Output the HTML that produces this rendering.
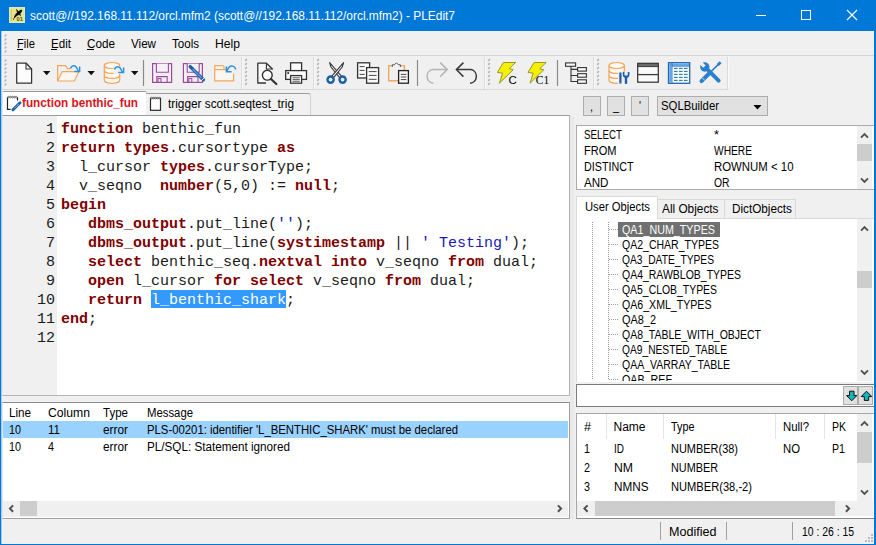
<!DOCTYPE html>
<html lang="en"><head><meta charset="utf-8"><title>PLEdit7</title>
<style>
html,body{margin:0;padding:0;background:#f0f0f0;}
body{width:876px;height:545px;overflow:hidden;position:relative;}
#win{position:absolute;left:0;top:0;width:876px;height:545px;overflow:hidden;background:#f0f0f0;}
.b{position:absolute;box-sizing:border-box;}
.t{position:absolute;white-space:pre;line-height:1;transform-origin:0 0;color:#000;}
.u{font-family:"Liberation Sans",sans-serif;font-size:12px;}
.m{font-family:"Liberation Mono",monospace;font-size:15px;}
.s1{font-family:"Liberation Sans",sans-serif;font-size:5.8px;font-weight:700;}
.s2{font-family:"Liberation Sans",sans-serif;font-size:11.5px;}
.s3{font-family:"Liberation Serif",serif;font-size:11.5px;}

</style></head>
<body>
<div id="win">
<div class="b" style="left:0px;top:0px;width:876px;height:31px;background:#0078d7;"></div><svg class="b" style="left:9px;top:7px" width="16" height="16" viewBox="0 0 16 16"><rect x="0" y="0" width="16" height="16" fill="#e5e58c"/><rect x="0.4" y="0.4" width="15.2" height="15.2" fill="none" stroke="#d3ecd6" stroke-width="0.8"/><path d="M2.3 2 V14" stroke="#e2b462" stroke-width="0.9"/><path d="M13.3 2.9 C11.6 2.7 10.4 3.5 9.6 4.3 L6.9 1.7 L8.1 5.4 C6.2 7 4.9 9 4.7 12.1 C6.4 10.1 8 8.9 10.1 7.8 L11.8 9.5 L11.4 6.5 C12.4 5.5 13.1 4.2 13.3 2.9 Z" fill="#0c0c0c"/><rect x="4" y="11.4" width="0.9" height="1.6" fill="#55551a"/><text x="7.6" y="13.7" class="s1" fill="#55551a">01</text></svg><span class="t u " style="left:30px;top:10px;color:#fff;transform:scaleX(0.9937);">scott@//192.168.11.112/orcl.mfm2 (scott@//192.168.11.112/orcl.mfm2) - PLEdit7</span><svg class="b" style="left:750px;top:5px" width="120" height="22" viewBox="0 0 120 22"><path d="M6 10.5 H16" stroke="#fff" stroke-width="1"/><rect x="51.5" y="5.5" width="9" height="9" fill="none" stroke="#fff" stroke-width="1"/><path d="M97 5 L107 15 M107 5 L97 15" stroke="#fff" stroke-width="1.1"/></svg><div class="b" style="left:0px;top:31px;width:1px;height:514px;background:#0078d7;"></div><div class="b" style="left:1px;top:31px;width:1px;height:514px;background:#a9cdee;"></div><div class="b" style="left:874px;top:31px;width:2px;height:514px;background:#0078d7;"></div><div class="b" style="left:0px;top:544px;width:876px;height:1px;background:#0078d7;"></div><div class="b" style="left:2px;top:55px;width:872px;height:1px;background:#d4d4d4;"></div><svg class="b" style="left:3.5px;top:33.5px" width="4" height="20" viewBox="0 0 4 20"><path d="M0.7 2.4 L2.3 0.6" stroke="#b4b4b4" stroke-width="1.5"/><path d="M0.7 6.4 L2.3 4.6" stroke="#b4b4b4" stroke-width="1.5"/><path d="M0.7 10.4 L2.3 8.6" stroke="#b4b4b4" stroke-width="1.5"/><path d="M0.7 14.4 L2.3 12.6" stroke="#b4b4b4" stroke-width="1.5"/><path d="M0.7 18.4 L2.3 16.6" stroke="#b4b4b4" stroke-width="1.5"/></svg><span class="t u " style="left:17px;top:38px;transform:scaleX(0.9305);">File</span><span class="t u " style="left:51px;top:38px;transform:scaleX(0.9668);">Edit</span><span class="t u " style="left:87px;top:38px;transform:scaleX(0.9760);">Code</span><span class="t u " style="left:131px;top:38px;transform:scaleX(0.9691);">View</span><span class="t u " style="left:172px;top:38px;transform:scaleX(0.9637);">Tools</span><span class="t u " style="left:215px;top:38px;transform:scaleX(1.0127);">Help</span><div class="b" style="left:17px;top:49px;width:6px;height:1px;background:#000;"></div><div class="b" style="left:51px;top:49px;width:6px;height:1px;background:#000;"></div><div class="b" style="left:87px;top:49px;width:7px;height:1px;background:#000;"></div><div class="b" style="left:2px;top:89px;width:726px;height:1px;background:#d9d9d9;"></div><svg class="b" style="left:3.5px;top:58.5px" width="4" height="28" viewBox="0 0 4 28"><path d="M0.7 2.4 L2.3 0.6" stroke="#b4b4b4" stroke-width="1.5"/><path d="M0.7 6.4 L2.3 4.6" stroke="#b4b4b4" stroke-width="1.5"/><path d="M0.7 10.4 L2.3 8.6" stroke="#b4b4b4" stroke-width="1.5"/><path d="M0.7 14.4 L2.3 12.6" stroke="#b4b4b4" stroke-width="1.5"/><path d="M0.7 18.4 L2.3 16.6" stroke="#b4b4b4" stroke-width="1.5"/><path d="M0.7 22.4 L2.3 20.6" stroke="#b4b4b4" stroke-width="1.5"/><path d="M0.7 26.4 L2.3 24.6" stroke="#b4b4b4" stroke-width="1.5"/></svg><div class="b" style="left:2px;top:91px;width:145px;height:25px;background:#fff;border:1px solid #d0d0d0;border-top-color:#9a9a9a;border-left-color:#e6e6e6;border-bottom:none;border-radius:2px 2px 0 0;"></div><div class="b" style="left:146px;top:93px;width:165px;height:23px;background:#f1f1f1;border:1px solid #cfcfcf;border-top-color:#9c9c9c;border-left:none;border-bottom:none;border-radius:0 3px 0 0;"></div><span class="t u " style="left:22px;top:97px;font-weight:700;color:#d8141e;transform:scaleX(0.9776);">function benthic_fun</span><span class="t u " style="left:167.5px;top:98px;transform:scaleX(0.9839);">trigger scott.seqtest_trig</span><svg class="b" style="left:6px;top:94px" width="16" height="18" viewBox="0 0 16 18"><path d="M1.5 3.3 V15.4 H4.6 M11.5 3.3 V6.6" fill="none" stroke="#222" stroke-width="1.2"/><circle cx="2.6" cy="3.1" r="0.85" fill="#fff" stroke="#333" stroke-width="0.6"/><circle cx="4.5" cy="3.1" r="0.85" fill="#fff" stroke="#333" stroke-width="0.6"/><circle cx="6.4" cy="3.1" r="0.85" fill="#fff" stroke="#333" stroke-width="0.6"/><circle cx="8.3" cy="3.1" r="0.85" fill="#fff" stroke="#333" stroke-width="0.6"/><circle cx="10.2" cy="3.1" r="0.85" fill="#fff" stroke="#333" stroke-width="0.6"/><path d="M14 8.8 L7 15.8" stroke="#2462ad" stroke-width="3" stroke-linecap="round"/><path d="M12.9 9.9 L8.6 14.2" stroke="#7db3ea" stroke-width="0.9"/><path d="M6 17 L6.4 14.6 L8.4 16.4 Z" fill="#2462ad"/></svg><svg class="b" style="left:149px;top:95px" width="16" height="18" viewBox="0 0 16 18"><rect x="1.5" y="3.3" width="10" height="12" fill="#fff" stroke="#2a2a2a" stroke-width="1.2"/><circle cx="2.6" cy="3.1" r="0.85" fill="#fff" stroke="#333" stroke-width="0.6"/><circle cx="4.5" cy="3.1" r="0.85" fill="#fff" stroke="#333" stroke-width="0.6"/><circle cx="6.4" cy="3.1" r="0.85" fill="#fff" stroke="#333" stroke-width="0.6"/><circle cx="8.3" cy="3.1" r="0.85" fill="#fff" stroke="#333" stroke-width="0.6"/><circle cx="10.2" cy="3.1" r="0.85" fill="#fff" stroke="#333" stroke-width="0.6"/></svg><div class="b" style="left:2px;top:115px;width:568px;height:281px;background:#fff;border:1px solid #b4b4b4;border-top-color:#9c9c9c;border-left-color:#e6e6e6;"></div><div class="b" style="left:3px;top:116px;width:54px;height:279px;background:#f0f0f0;"></div><div class="b" style="left:570px;top:116px;width:4px;height:403px;background:#e9e9e9;"></div><span class="t m " style="left:46px;top:122px;color:#1a1a1a;">1</span><span class="t m " style="left:61px;top:122px;font-weight:700;color:#800000;">function</span><span class="t m " style="left:142px;top:122px;color:#1a1a1a;">benthic_fun</span><span class="t m " style="left:46px;top:141px;color:#1a1a1a;">2</span><span class="t m " style="left:61px;top:141px;font-weight:700;color:#800000;">return</span><span class="t m " style="left:124px;top:141px;font-weight:700;color:#800000;">types</span><span class="t m " style="left:169px;top:141px;color:#1a1a1a;">.cursortype </span><span class="t m " style="left:277px;top:141px;font-weight:700;color:#800000;">as</span><span class="t m " style="left:46px;top:160px;color:#1a1a1a;">3</span><span class="t m " style="left:79px;top:160px;color:#1a1a1a;">l_cursor </span><span class="t m " style="left:160px;top:160px;font-weight:700;color:#800000;">types</span><span class="t m " style="left:205px;top:160px;color:#1a1a1a;">.cursorType;</span><span class="t m " style="left:46px;top:179px;color:#1a1a1a;">4</span><span class="t m " style="left:79px;top:179px;color:#1a1a1a;">v_seqno  </span><span class="t m " style="left:160px;top:179px;font-weight:700;color:#800000;">number</span><span class="t m " style="left:214px;top:179px;color:#1a1a1a;">(5,0) := </span><span class="t m " style="left:295px;top:179px;font-weight:700;color:#800000;">null</span><span class="t m " style="left:331px;top:179px;color:#1a1a1a;">;</span><span class="t m " style="left:46px;top:198px;color:#1a1a1a;">5</span><span class="t m " style="left:61px;top:198px;font-weight:700;color:#800000;">begin</span><span class="t m " style="left:46px;top:217px;color:#1a1a1a;">6</span><span class="t m " style="left:88px;top:217px;font-weight:700;color:#800000;">dbms_output</span><span class="t m " style="left:187px;top:217px;color:#1a1a1a;">.put_line(</span><span class="t m " style="left:277px;top:217px;color:#1818b8;">''</span><span class="t m " style="left:295px;top:217px;color:#1a1a1a;">);</span><span class="t m " style="left:46px;top:236px;color:#1a1a1a;">7</span><span class="t m " style="left:88px;top:236px;font-weight:700;color:#800000;">dbms_output</span><span class="t m " style="left:187px;top:236px;color:#1a1a1a;">.put_line(</span><span class="t m " style="left:277px;top:236px;font-weight:700;color:#800000;">systimestamp</span><span class="t m " style="left:394px;top:236px;color:#1a1a1a;">|| </span><span class="t m " style="left:421px;top:236px;color:#1818b8;">' Testing'</span><span class="t m " style="left:511px;top:236px;color:#1a1a1a;">);</span><span class="t m " style="left:46px;top:255px;color:#1a1a1a;">8</span><span class="t m " style="left:88px;top:255px;font-weight:700;color:#800000;">select</span><span class="t m " style="left:151px;top:255px;color:#1a1a1a;">benthic_seq.</span><span class="t m " style="left:259px;top:255px;font-weight:700;color:#800000;">nextval</span><span class="t m " style="left:331px;top:255px;font-weight:700;color:#800000;">into</span><span class="t m " style="left:376px;top:255px;color:#1a1a1a;">v_seqno </span><span class="t m " style="left:448px;top:255px;font-weight:700;color:#800000;">from</span><span class="t m " style="left:493px;top:255px;color:#1a1a1a;">dual;</span><span class="t m " style="left:46px;top:274px;color:#1a1a1a;">9</span><span class="t m " style="left:88px;top:274px;font-weight:700;color:#800000;">open</span><span class="t m " style="left:133px;top:274px;color:#1a1a1a;">l_cursor </span><span class="t m " style="left:214px;top:274px;font-weight:700;color:#800000;">for</span><span class="t m " style="left:250px;top:274px;font-weight:700;color:#800000;">select</span><span class="t m " style="left:313px;top:274px;color:#1a1a1a;">v_seqno </span><span class="t m " style="left:385px;top:274px;font-weight:700;color:#800000;">from</span><span class="t m " style="left:430px;top:274px;color:#1a1a1a;">dual;</span><span class="t m " style="left:37px;top:293px;color:#1a1a1a;">10</span><span class="t m " style="left:88px;top:293px;font-weight:700;color:#800000;">return</span><div class="b" style="left:151px;top:290px;width:135px;height:18px;background:#3399ff;"></div><span class="t m " style="left:151px;top:293px;color:#fff;">l_benthic_shark</span><span class="t m " style="left:286px;top:293px;color:#1a1a1a;">;</span><span class="t m " style="left:37px;top:312px;color:#1a1a1a;">11</span><span class="t m " style="left:61px;top:312px;font-weight:700;color:#800000;">end</span><span class="t m " style="left:88px;top:312px;color:#1a1a1a;">;</span><span class="t m " style="left:37px;top:331px;color:#1a1a1a;">12</span><div class="b" style="left:2px;top:402px;width:568px;height:117px;background:#fff;border:1px solid #a0a0a0;border-top-color:#8c8c8c;border-left-color:#e3e3e3;"></div><span class="t u " style="left:9px;top:407px;transform:scaleX(0.9697);">Line</span><span class="t u " style="left:48px;top:407px;transform:scaleX(1.0155);">Column</span><span class="t u " style="left:103px;top:407px;transform:scaleX(0.9610);">Type</span><span class="t u " style="left:147px;top:407px;transform:scaleX(0.9445);">Message</span><div class="b" style="left:3px;top:421px;width:565px;height:17px;background:#99d1ff;"></div><span class="t u " style="left:9px;top:424px;transform:scaleX(0.8982);">10</span><span class="t u " style="left:48px;top:424px;transform:scaleX(0.9624);">11</span><span class="t u " style="left:103px;top:424px;transform:scaleX(0.9864);">error</span><span class="t u " style="left:147px;top:424px;transform:scaleX(0.9441);">PLS-00201: identifier 'L_BENTHIC_SHARK' must be declared</span><span class="t u " style="left:9px;top:441px;transform:scaleX(0.8982);">10</span><span class="t u " style="left:48px;top:441px;transform:scaleX(0.8972);">4</span><span class="t u " style="left:103px;top:441px;transform:scaleX(0.9864);">error</span><span class="t u " style="left:147px;top:441px;transform:scaleX(0.9743);">PL/SQL: Statement ignored</span><div class="b" style="left:3px;top:501px;width:565px;height:16px;background:#f0f0f0;"></div><div class="b" style="left:20px;top:501px;width:17px;height:15px;background:#cdcdcd;"></div><svg class="b" style="left:3px;top:500px" width="17" height="17" viewBox="0 0 17 17"><path d="M10.1 5.4 L6.9 8.6 L10.1 11.8" fill="none" stroke="#505050" stroke-width="2"/></svg><svg class="b" style="left:551px;top:500px" width="17" height="17" viewBox="0 0 17 17"><path d="M6.9 5.4 L10.1 8.6 L6.9 11.8" fill="none" stroke="#505050" stroke-width="2"/></svg><div class="b" style="left:660px;top:522px;width:1px;height:18px;background:#a0a0a0;"></div><div class="b" style="left:726px;top:522px;width:1px;height:18px;background:#a0a0a0;"></div><div class="b" style="left:792px;top:522px;width:1px;height:18px;background:#a0a0a0;"></div><span class="t u " style="left:668.5px;top:526px;transform:scaleX(1.0472);">Modified</span><span class="t u " style="left:802px;top:526px;transform:scaleX(0.8660);">10 : 26 : 15</span><svg class="b" style="left:862px;top:531px" width="12" height="12" viewBox="0 0 12 12"><rect x="9" y="3" width="2" height="2" fill="#bdbdbd"/><rect x="6" y="6" width="2" height="2" fill="#bdbdbd"/><rect x="9" y="6" width="2" height="2" fill="#bdbdbd"/><rect x="3" y="9" width="2" height="2" fill="#bdbdbd"/><rect x="6" y="9" width="2" height="2" fill="#bdbdbd"/><rect x="9" y="9" width="2" height="2" fill="#bdbdbd"/></svg><div class="b" style="left:583px;top:96px;width:18px;height:20px;background:#e1e1e1;border:1px solid #adadad;"></div><div class="b" style="left:607px;top:96px;width:18px;height:20px;background:#e1e1e1;border:1px solid #adadad;"></div><div class="b" style="left:631px;top:96px;width:18px;height:20px;background:#e1e1e1;border:1px solid #adadad;"></div><span class="t u " style="left:590px;top:101px;transform:scaleX(0.8972);">,</span><span class="t u " style="left:613px;top:100px;transform:scaleX(0.8972);">_</span><span class="t u " style="left:639px;top:100px;transform:scaleX(0.8707);">'</span><div class="b" style="left:657px;top:96px;width:111px;height:20px;background:#e1e1e1;border:1px solid #adadad;"></div><span class="t u " style="left:661px;top:100px;transform:scaleX(0.9450);">SQLBuilder</span><svg class="b" style="left:753px;top:104px" width="9" height="6" viewBox="0 0 9 6"><path d="M0.5 1 H8.5 L4.5 5.5 Z" fill="#000"/></svg><div class="b" style="left:576px;top:125px;width:298px;height:65px;background:#fff;border:1px solid #ababab;border-right:none;"></div><span class="t u " style="left:584px;top:129px;transform:scaleX(0.8139);">SELECT</span><span class="t u " style="left:713.5px;top:129px;transform:scaleX(1.0702);">*</span><span class="t u " style="left:584px;top:145px;transform:scaleX(0.9199);">FROM</span><span class="t u " style="left:713.5px;top:145px;transform:scaleX(0.8506);">WHERE</span><span class="t u " style="left:584px;top:161px;transform:scaleX(0.8944);">DISTINCT</span><span class="t u " style="left:713.5px;top:161px;transform:scaleX(0.9500);">ROWNUM &lt; 10</span><span class="t u " style="left:584px;top:177px;transform:scaleX(0.9667);">AND</span><span class="t u " style="left:713.5px;top:177px;transform:scaleX(0.8611);">OR</span><div class="b" style="left:857px;top:126px;width:15px;height:63px;background:#f0f0f0;"></div><div class="b" style="left:857px;top:144px;width:15px;height:17px;background:#cdcdcd;"></div><svg class="b" style="left:856px;top:126px" width="17" height="17" viewBox="0 0 17 17"><path d="M5 11.6 L8.5 8.1 L12 11.6" fill="none" stroke="#505050" stroke-width="1.9"/></svg><svg class="b" style="left:856px;top:172px" width="17" height="17" viewBox="0 0 17 17"><path d="M5 6.4 L8.5 9.9 L12 6.4" fill="none" stroke="#505050" stroke-width="1.9"/></svg><div class="b" style="left:576px;top:218px;width:298px;height:164px;background:#fff;border-left:1px solid #d9d9d9;border-top:1px solid #d9d9d9;"></div><div class="b" style="left:657px;top:199px;width:68px;height:20px;background:#f0f0f0;border:1px solid #d9d9d9;border-left:none;"></div><div class="b" style="left:725px;top:199px;width:71px;height:20px;background:#f0f0f0;border:1px solid #d9d9d9;border-left:none;"></div><div class="b" style="left:576px;top:196px;width:82px;height:23px;background:#fff;border:1px solid #d9d9d9;border-bottom:none;"></div><span class="t u " style="left:584.5px;top:201px;transform:scaleX(0.9371);">User Objects</span><span class="t u " style="left:662px;top:202.5px;transform:scaleX(0.9850);">All Objects</span><span class="t u " style="left:731.5px;top:202.5px;transform:scaleX(0.9778);">DictObjects</span><div class="b" style="left:577px;top:219px;width:279px;height:162px;overflow:hidden;"><svg class="b" style="left:0px;top:0px" width="60" height="162" viewBox="0 0 60 162"><path d="M15.5 3 V160 M31.5 3 V160" stroke="#9a9a9a" stroke-width="1" stroke-dasharray="1 1"/><path d="M32 10.5 H41" stroke="#9a9a9a" stroke-width="1" stroke-dasharray="1 1"/><path d="M32 25.5 H41" stroke="#9a9a9a" stroke-width="1" stroke-dasharray="1 1"/><path d="M32 40.5 H41" stroke="#9a9a9a" stroke-width="1" stroke-dasharray="1 1"/><path d="M32 55.5 H41" stroke="#9a9a9a" stroke-width="1" stroke-dasharray="1 1"/><path d="M32 70.5 H41" stroke="#9a9a9a" stroke-width="1" stroke-dasharray="1 1"/><path d="M32 85.5 H41" stroke="#9a9a9a" stroke-width="1" stroke-dasharray="1 1"/><path d="M32 100.5 H41" stroke="#9a9a9a" stroke-width="1" stroke-dasharray="1 1"/><path d="M32 115.5 H41" stroke="#9a9a9a" stroke-width="1" stroke-dasharray="1 1"/><path d="M32 130.5 H41" stroke="#9a9a9a" stroke-width="1" stroke-dasharray="1 1"/><path d="M32 145.5 H41" stroke="#9a9a9a" stroke-width="1" stroke-dasharray="1 1"/><path d="M32 160.5 H41" stroke="#9a9a9a" stroke-width="1" stroke-dasharray="1 1"/></svg><div class="b" style="left:41px;top:3px;width:102px;height:15px;background:#707070;"></div><span class="t u " style="left:45px;top:5px;color:#fff;transform:scaleX(0.8938);">QA1_NUM_TYPES</span><span class="t u " style="left:45px;top:20px;transform:scaleX(0.8761);">QA2_CHAR_TYPES</span><span class="t u " style="left:45px;top:35px;transform:scaleX(0.8532);">QA3_DATE_TYPES</span><span class="t u " style="left:45px;top:50px;transform:scaleX(0.8732);">QA4_RAWBLOB_TYPES</span><span class="t u " style="left:45px;top:65px;transform:scaleX(0.8684);">QA5_CLOB_TYPES</span><span class="t u " style="left:45px;top:80px;transform:scaleX(0.8827);">QA6_XML_TYPES</span><span class="t u " style="left:45px;top:95px;transform:scaleX(0.9101);">QA8_2</span><span class="t u " style="left:45px;top:110px;transform:scaleX(0.8734);">QA8_TABLE_WITH_OBJECT</span><span class="t u " style="left:45px;top:125px;transform:scaleX(0.8525);">QA9_NESTED_TABLE</span><span class="t u " style="left:45px;top:140px;transform:scaleX(0.8753);">QAA_VARRAY_TABLE</span><span class="t u " style="left:45px;top:155px;transform:scaleX(0.8926);">QAB_REF</span></div><div class="b" style="left:857px;top:219px;width:15px;height:162px;background:#f0f0f0;"></div><div class="b" style="left:857px;top:271px;width:15px;height:17px;background:#cdcdcd;"></div><svg class="b" style="left:856px;top:219px" width="17" height="17" viewBox="0 0 17 17"><path d="M5 11.6 L8.5 8.1 L12 11.6" fill="none" stroke="#505050" stroke-width="1.9"/></svg><svg class="b" style="left:856px;top:364px" width="17" height="17" viewBox="0 0 17 17"><path d="M5 6.4 L8.5 9.9 L12 6.4" fill="none" stroke="#505050" stroke-width="1.9"/></svg><div class="b" style="left:576px;top:384px;width:298px;height:23px;background:#fff;border:1px solid #7a7a7a;border-right:none;"></div><div class="b" style="left:843px;top:386px;width:15px;height:19px;background:#e1e1e1;border:1px solid #adadad;"></div><div class="b" style="left:858px;top:386px;width:15px;height:19px;background:#e1e1e1;border:1px solid #adadad;"></div><svg class="b" style="left:843px;top:386px" width="15" height="19" viewBox="0 0 15 19"><path d="M6.5 5.2 H11 V9.6 H13.8 L8.7 14.8 L3.6 9.6 H6.5 Z" fill="#17b4b8" stroke="#111" stroke-width="1"/></svg><svg class="b" style="left:858px;top:386px" width="15" height="19" viewBox="0 0 15 19"><path d="M8.5 5.2 L13.8 10.6 H10.7 V14.4 H6.3 V10.6 H3.2 Z" fill="#17b4b8" stroke="#111" stroke-width="1"/></svg><div class="b" style="left:576px;top:413px;width:298px;height:106px;background:#fff;border:1px solid #a6a6a6;border-bottom-color:#8a8a8a;border-right:none;"></div><div class="b" style="left:606px;top:414px;width:1px;height:25px;background:#e5e5e5;"></div><div class="b" style="left:663px;top:414px;width:1px;height:25px;background:#e5e5e5;"></div><div class="b" style="left:775px;top:414px;width:1px;height:25px;background:#e5e5e5;"></div><div class="b" style="left:824px;top:414px;width:1px;height:25px;background:#e5e5e5;"></div><span class="t u " style="left:584px;top:421px;transform:scaleX(1.0467);">#</span><span class="t u " style="left:613.5px;top:421px;">Name</span><span class="t u " style="left:670.5px;top:421px;transform:scaleX(0.9033);">Type</span><span class="t u " style="left:782.5px;top:421px;transform:scaleX(0.9503);">Null?</span><span class="t u " style="left:831.5px;top:421px;transform:scaleX(0.8741);">PK</span><span class="t u " style="left:584px;top:443px;transform:scaleX(0.8972);">1</span><span class="t u " style="left:613.5px;top:443px;transform:scaleX(0.8333);">ID</span><span class="t u " style="left:670.5px;top:443px;transform:scaleX(0.9135);">NUMBER(38)</span><span class="t u " style="left:782.5px;top:443px;transform:scaleX(0.9444);">NO</span><span class="t u " style="left:831.5px;top:443px;transform:scaleX(0.8851);">P1</span><span class="t u " style="left:584px;top:462px;transform:scaleX(0.8972);">2</span><span class="t u " style="left:613.5px;top:462px;transform:scaleX(1.0176);">NM</span><span class="t u " style="left:670.5px;top:462px;transform:scaleX(0.9036);">NUMBER</span><span class="t u " style="left:584px;top:481px;transform:scaleX(0.8972);">3</span><span class="t u " style="left:613.5px;top:481px;transform:scaleX(0.9761);">NMNS</span><span class="t u " style="left:670.5px;top:481px;transform:scaleX(0.9272);">NUMBER(38,-2)</span><div class="b" style="left:857px;top:414px;width:15px;height:87px;background:#f0f0f0;"></div><div class="b" style="left:857px;top:432px;width:15px;height:31px;background:#cdcdcd;"></div><svg class="b" style="left:856px;top:414px" width="17" height="17" viewBox="0 0 17 17"><path d="M5 11.6 L8.5 8.1 L12 11.6" fill="none" stroke="#505050" stroke-width="1.9"/></svg><svg class="b" style="left:856px;top:484px" width="17" height="17" viewBox="0 0 17 17"><path d="M5 6.4 L8.5 9.9 L12 6.4" fill="none" stroke="#505050" stroke-width="1.9"/></svg><div class="b" style="left:577px;top:501px;width:296px;height:15px;background:#f0f0f0;"></div><div class="b" style="left:595px;top:501px;width:240px;height:15px;background:#cdcdcd;"></div><svg class="b" style="left:577px;top:500px" width="17" height="17" viewBox="0 0 17 17"><path d="M10.6 5.4 L7.4 8.6 L10.6 11.8" fill="none" stroke="#505050" stroke-width="2"/></svg><svg class="b" style="left:839px;top:500px" width="17" height="17" viewBox="0 0 17 17"><path d="M6.9 5.4 L10.1 8.6 L6.9 11.8" fill="none" stroke="#505050" stroke-width="2"/></svg><svg class="b" style="left:0;top:56px" width="876" height="34" viewBox="0 56 876 34"><path d="M241.5 57 V89" stroke="#dadada" stroke-width="1"/><path d="M242.5 57 V89" stroke="#fafafa" stroke-width="1"/><path d="M313.5 57 V89" stroke="#dadada" stroke-width="1"/><path d="M314.5 57 V89" stroke="#fafafa" stroke-width="1"/><path d="M484.5 57 V89" stroke="#dadada" stroke-width="1"/><path d="M485.5 57 V89" stroke="#fafafa" stroke-width="1"/><path d="M593.5 57 V89" stroke="#dadada" stroke-width="1"/><path d="M594.5 57 V89" stroke="#fafafa" stroke-width="1"/><path d="M727.5 57 V89" stroke="#dadada" stroke-width="1"/><path d="M728.5 57 V89" stroke="#fafafa" stroke-width="1"/><path d="M245.2 60.9 L246.8 59.1" stroke="#b4b4b4" stroke-width="1.5"/><path d="M245.2 64.9 L246.8 63.1" stroke="#b4b4b4" stroke-width="1.5"/><path d="M245.2 68.9 L246.8 67.1" stroke="#b4b4b4" stroke-width="1.5"/><path d="M245.2 72.9 L246.8 71.1" stroke="#b4b4b4" stroke-width="1.5"/><path d="M245.2 76.9 L246.8 75.1" stroke="#b4b4b4" stroke-width="1.5"/><path d="M245.2 80.9 L246.8 79.1" stroke="#b4b4b4" stroke-width="1.5"/><path d="M245.2 84.9 L246.8 83.1" stroke="#b4b4b4" stroke-width="1.5"/><path d="M317.2 60.9 L318.8 59.1" stroke="#b4b4b4" stroke-width="1.5"/><path d="M317.2 64.9 L318.8 63.1" stroke="#b4b4b4" stroke-width="1.5"/><path d="M317.2 68.9 L318.8 67.1" stroke="#b4b4b4" stroke-width="1.5"/><path d="M317.2 72.9 L318.8 71.1" stroke="#b4b4b4" stroke-width="1.5"/><path d="M317.2 76.9 L318.8 75.1" stroke="#b4b4b4" stroke-width="1.5"/><path d="M317.2 80.9 L318.8 79.1" stroke="#b4b4b4" stroke-width="1.5"/><path d="M317.2 84.9 L318.8 83.1" stroke="#b4b4b4" stroke-width="1.5"/><path d="M488.2 60.9 L489.8 59.1" stroke="#b4b4b4" stroke-width="1.5"/><path d="M488.2 64.9 L489.8 63.1" stroke="#b4b4b4" stroke-width="1.5"/><path d="M488.2 68.9 L489.8 67.1" stroke="#b4b4b4" stroke-width="1.5"/><path d="M488.2 72.9 L489.8 71.1" stroke="#b4b4b4" stroke-width="1.5"/><path d="M488.2 76.9 L489.8 75.1" stroke="#b4b4b4" stroke-width="1.5"/><path d="M488.2 80.9 L489.8 79.1" stroke="#b4b4b4" stroke-width="1.5"/><path d="M488.2 84.9 L489.8 83.1" stroke="#b4b4b4" stroke-width="1.5"/><path d="M597.2 60.9 L598.8 59.1" stroke="#b4b4b4" stroke-width="1.5"/><path d="M597.2 64.9 L598.8 63.1" stroke="#b4b4b4" stroke-width="1.5"/><path d="M597.2 68.9 L598.8 67.1" stroke="#b4b4b4" stroke-width="1.5"/><path d="M597.2 72.9 L598.8 71.1" stroke="#b4b4b4" stroke-width="1.5"/><path d="M597.2 76.9 L598.8 75.1" stroke="#b4b4b4" stroke-width="1.5"/><path d="M597.2 80.9 L598.8 79.1" stroke="#b4b4b4" stroke-width="1.5"/><path d="M597.2 84.9 L598.8 83.1" stroke="#b4b4b4" stroke-width="1.5"/><path d="M143.5 60 V86" stroke="#8a8a8a" stroke-width="1.2"/><path d="M417.5 60 V86" stroke="#8a8a8a" stroke-width="1.2"/><path d="M557.5 60 V86" stroke="#8a8a8a" stroke-width="1.2"/><path d="M43 71 H50.4 L46.7 75.2 Z" fill="#111"/><path d="M87.5 71 H94.9 L91.2 75.2 Z" fill="#111"/><path d="M131 71 H138.4 L134.7 75.2 Z" fill="#111"/><path d="M16.7 63 H26 L31.6 69 V83.2 H16.7 Z" fill="#fcfcfc" stroke="#333" stroke-width="1.25" stroke-linejoin="round"/><path d="M26 63 V69 H31.6" fill="none" stroke="#333" stroke-width="1.1"/><path d="M57.6 81 V65.6 H65.5 L67.5 68.6 H70" fill="none" stroke="#f2a65e" stroke-width="1.2"/><path d="M57.6 81 L62.3 71.6 H79 L74.3 81 Z" fill="#fdf6ee" stroke="#f2a65e" stroke-width="1.2" stroke-linejoin="round"/><path d="M70.5 68.5 C71.5 65 75 65 76.5 67.5 L78.3 71" fill="none" stroke="#2f8fe0" stroke-width="1.5"/><path d="M74.3 71.6 H79.6 V66.4" fill="none" stroke="#2f8fe0" stroke-width="1.5"/><path d="M104.3 65.5 V80.3 A7.7 3 0 0 0 119.7 80.3 V65.5" fill="#fdf8f2" stroke="#f2a65e" stroke-width="1.2"/><ellipse cx="112" cy="65.5" rx="7.7" ry="3" fill="#fdf8f2" stroke="#f2a65e" stroke-width="1.2"/><path d="M104.3 70.4 A7.7 3 0 0 0 119.7 70.4" fill="none" stroke="#f2a65e" stroke-width="1.2"/><path d="M104.3 75.4 A7.7 3 0 0 0 119.7 75.4" fill="none" stroke="#f2a65e" stroke-width="1.2"/><rect x="113.5" y="66" width="11.5" height="8" fill="#f0f0f0"/><path d="M114.5 69.5 C115.5 66 119 66 120.5 68.5 L122.3 72" fill="none" stroke="#2f8fe0" stroke-width="1.5"/><path d="M118.3 72.6 H123.6 V67.4" fill="none" stroke="#2f8fe0" stroke-width="1.5"/><rect x="152.6" y="63.6" width="19" height="18.8" fill="#f3ecf3" stroke="#9a4c9a" stroke-width="1.2"/><path d="M156.4 63.6 V72.3 H168.4 V63.6" fill="#f6f1f6" stroke="#9a4c9a" stroke-width="1.1"/><path d="M156.8 82.4 V76.6 H167.2 V82.4" fill="none" stroke="#9a4c9a" stroke-width="1.1"/><rect x="158.0" y="78.6" width="3" height="3.8" fill="none" stroke="#9a4c9a" stroke-width="1"/><rect x="183.4" y="63.6" width="19" height="18.8" fill="#f3ecf3" stroke="#9a4c9a" stroke-width="1.2"/><path d="M187.2 63.6 V72.3 H199.2 V63.6" fill="#f6f1f6" stroke="#9a4c9a" stroke-width="1.1"/><path d="M187.6 82.4 V76.6 H198.0 V82.4" fill="none" stroke="#9a4c9a" stroke-width="1.1"/><rect x="188.8" y="78.6" width="3" height="3.8" fill="none" stroke="#9a4c9a" stroke-width="1"/><path d="M190.2 66.6 L203.4 79.8" stroke="#1d5fa6" stroke-width="3.4" stroke-linecap="round"/><path d="M192.6 69 L201.6 78" stroke="#5a9ee0" stroke-width="1.3"/><path d="M200.6 81.4 L204.6 77.4" stroke="#fff" stroke-width="0.9"/><path d="M189.4 65.8 L193.6 67.6 L191.2 70 Z" fill="#1d5fa6"/><path d="M214.7 69.6 V65.6 H222.5 Q224 65.6 224 67.5 V69.6" fill="#fdf6ee" stroke="#f2a65e" stroke-width="1.2"/><path d="M233.6 73.5 V80.8 H214.7 V69.6 H226" fill="#fdf6ee" stroke="#f2a65e" stroke-width="1.2"/><path d="M235.6 69.5 C235 65.5 230.5 65 228.5 68 L227 71" fill="none" stroke="#2f8fe0" stroke-width="1.5"/><path d="M226.4 66.6 V71.8 H231.6" fill="none" stroke="#2f8fe0" stroke-width="1.5"/><path d="M272.4 69.6 V69 L266.4 63.2 H257.8 V83 H266" fill="#f8f8f8" stroke="#333" stroke-width="1.3" stroke-linejoin="round"/><path d="M266.4 63.2 V69 H272.4" fill="none" stroke="#333" stroke-width="1.1"/><circle cx="267.3" cy="75.2" r="4.9" fill="#fbfbfb" stroke="#333" stroke-width="1.4"/><path d="M271 79 L276.3 84" stroke="#333" stroke-width="2.2" stroke-linecap="round"/><rect x="290.6" y="62.8" width="11" height="8" fill="#fafafa" stroke="#333" stroke-width="1.3"/><rect x="285.7" y="70.6" width="20.8" height="8.8" fill="#fafafa" stroke="#333" stroke-width="1.3"/><rect x="290.6" y="75.6" width="11" height="7.6" fill="#fafafa" stroke="#333" stroke-width="1.3"/><path d="M292.5 77.8 H299.8 M292.5 79.6 H299.8 M292.5 81.3 H299.8" stroke="#333" stroke-width="0.8"/><rect x="287.3" y="72.2" width="1.8" height="1.8" fill="#333"/><path d="M329.6 62.6 L331 67 L339.6 77.6 L341.6 76.4 Z" fill="#fff" stroke="#333" stroke-width="1.1" stroke-linejoin="round"/><path d="M343.6 62.6 L342.2 67 L333.6 77.6 L331.6 76.4 Z" fill="#fff" stroke="#333" stroke-width="1.1" stroke-linejoin="round"/><circle cx="330.6" cy="79.6" r="3.1" fill="#eaf3fc" stroke="#1d5fa6" stroke-width="2.4"/><circle cx="342.6" cy="79.6" r="3.1" fill="#eaf3fc" stroke="#1d5fa6" stroke-width="2.4"/><rect x="357.6" y="62.8" width="12" height="15.2" fill="#fafafa" stroke="#333" stroke-width="1.3"/><path d="M359.6 66.6 H364.6 M359.6 70.4 H364.6 M359.6 74.4 H364.6" stroke="#333" stroke-width="0.9"/><rect x="366.6" y="67.6" width="12" height="15.6" fill="#fafafa" stroke="#333" stroke-width="1.3"/><path d="M368.8 71.6 H376.6 M368.8 75.4 H376.6 M368.8 79.3 H376.6" stroke="#333" stroke-width="0.9"/><path d="M392.5 65.6 H388.7 V80.8 H398 M400.3 65.6 H404.4 V70" fill="none" stroke="#f2a65e" stroke-width="1.4"/><path d="M392.3 67 V64.8 H394.4 L396.4 62.8 L398.4 64.8 H400.4 V67" fill="#f4f4f4" stroke="#555" stroke-width="1"/><rect x="398.6" y="70.6" width="9.8" height="12.6" fill="#fafafa" stroke="#222" stroke-width="1.3"/><path d="M400.8 74.4 H406.4 M400.8 77 H406.4 M400.8 79.6 H406.4" stroke="#333" stroke-width="0.9"/><path d="M433.5 83.2 A6.9 6.9 0 0 1 432.4 69.6 H447" fill="none" stroke="#b4b4b4" stroke-width="1.5"/><path d="M440.2 62.6 L447.2 69.6 L440.2 76.6" fill="none" stroke="#b4b4b4" stroke-width="1.5"/><path d="M470 83.2 A6.9 6.9 0 0 0 471 69.6 H456.6" fill="none" stroke="#3a3a3a" stroke-width="1.5"/><path d="M463.4 62.6 L456.4 69.6 L463.4 76.6" fill="none" stroke="#3a3a3a" stroke-width="1.5"/><path d="M503.4 62.5 L515.6 62.5 L509.2 68.6 L513.2 69.8 L499.4 83.2 L502.6 73.2 L497.4 72.4 Z" fill="#f4f000" stroke="#8c8c28" stroke-width="0.9" stroke-linejoin="round"/><path d="M534.0 62.5 L546.2 62.5 L539.8 68.6 L543.8 69.8 L530.0 83.2 L533.2 73.2 L528.0 72.4 Z" fill="#f4f000" stroke="#8c8c28" stroke-width="0.9" stroke-linejoin="round"/><text x="508.6" y="83.6" class="s2" fill="#000">C</text><text x="535.8" y="83.6" class="s3" fill="#000">C1</text><rect x="565.6" y="62.9" width="10" height="3.4" fill="#fafafa" stroke="#333" stroke-width="1.1"/><path d="M571 66.3 V81.5 H577.6 M571 69.4 H577.6 M571 75.5 H577.6" fill="none" stroke="#333" stroke-width="1.1"/><rect x="577.6" y="67.6" width="8.8" height="3.5" fill="#fafafa" stroke="#333" stroke-width="1.1"/><rect x="577.6" y="73.7" width="8.8" height="3.5" fill="#fafafa" stroke="#333" stroke-width="1.1"/><rect x="577.6" y="79.8" width="8.8" height="3.5" fill="#fafafa" stroke="#333" stroke-width="1.1"/><path d="M609.0 65.5 V80.3 A7.7 3 0 0 0 624.4 80.3 V65.5" fill="#fdf8f2" stroke="#f2a65e" stroke-width="1.2"/><ellipse cx="616.7" cy="65.5" rx="7.7" ry="3" fill="#fdf8f2" stroke="#f2a65e" stroke-width="1.2"/><path d="M609.0 70.4 A7.7 3 0 0 0 624.4 70.4" fill="none" stroke="#f2a65e" stroke-width="1.2"/><path d="M609.0 75.4 A7.7 3 0 0 0 624.4 75.4" fill="none" stroke="#f2a65e" stroke-width="1.2"/><rect x="618" y="71.5" width="12" height="13" fill="#f0f0f0"/><path d="M620.4 72.4 V76 M620.4 78 V83.6" stroke="#1d5fa6" stroke-width="2.2"/><path d="M619 76 H621.8 L621.2 78.4 H619.6 Z" fill="#1d5fa6"/><path d="M626 75.5 V83.8" stroke="#1d5fa6" stroke-width="2.4"/><path d="M623.6 72 V74.6 A2.5 2.5 0 0 0 628.6 74.6 V72" fill="none" stroke="#1d5fa6" stroke-width="1.7"/><rect x="637.7" y="63.4" width="20.6" height="18.8" fill="#fafafa" stroke="#3c3c3c" stroke-width="1.3"/><rect x="637.7" y="63.4" width="20.6" height="3.2" fill="#6a6a6a" stroke="#3c3c3c" stroke-width="1"/><path d="M637.7 74.6 H658.3" stroke="#3c3c3c" stroke-width="1.3"/><rect x="668.5" y="62.7" width="21.2" height="20.6" fill="#f4fbff" stroke="#2466b0" stroke-width="1.3"/><rect x="669.2" y="63.4" width="19.8" height="2.4" fill="#62a6ee"/><rect x="669.2" y="63.4" width="2.4" height="19.2" fill="#62a6ee"/><path d="M672 66.2 H689 M672 63 V83" stroke="#2466b0" stroke-width="0.8"/><path d="M674 68.4 H677.6" stroke="#2b7b8c" stroke-width="1.1"/><path d="M679 68.4 H682.6" stroke="#2b7b8c" stroke-width="1.1"/><path d="M684 68.4 H687.6" stroke="#2b7b8c" stroke-width="1.1"/><path d="M674 71.4 H677.6" stroke="#2b7b8c" stroke-width="1.1"/><path d="M679 71.4 H682.6" stroke="#2b7b8c" stroke-width="1.1"/><path d="M684 71.4 H687.6" stroke="#2b7b8c" stroke-width="1.1"/><path d="M674 74.4 H677.6" stroke="#2b7b8c" stroke-width="1.1"/><path d="M679 74.4 H682.6" stroke="#2b7b8c" stroke-width="1.1"/><path d="M684 74.4 H687.6" stroke="#2b7b8c" stroke-width="1.1"/><path d="M674 77.4 H677.6" stroke="#2b7b8c" stroke-width="1.1"/><path d="M679 77.4 H682.6" stroke="#2b7b8c" stroke-width="1.1"/><path d="M684 77.4 H687.6" stroke="#2b7b8c" stroke-width="1.1"/><path d="M674 80.4 H677.6" stroke="#2b7b8c" stroke-width="1.1"/><path d="M679 80.4 H682.6" stroke="#2b7b8c" stroke-width="1.1"/><path d="M684 80.4 H687.6" stroke="#2b7b8c" stroke-width="1.1"/><path d="M708.4 70.4 L718.6 80.6" stroke="#2d7fcc" stroke-width="4" stroke-linecap="round"/><circle cx="704.8" cy="67" r="4.7" fill="#2d7fcc"/><path d="M704.4 66.6 L698.4 60.6" stroke="#f0f0f0" stroke-width="3.4"/><path d="M709.6 73 L701.5 81.1" stroke="#2d7fcc" stroke-width="4" stroke-linecap="round"/><path d="M702.3 77.9 L704.7 80.3" stroke="#f0f0f0" stroke-width="0.8"/><path d="M710.6 72 L719.4 63.4" stroke="#2d7fcc" stroke-width="1.7"/><path d="M717.8 65 L720.6 62.2" stroke="#2d7fcc" stroke-width="2.8"/></svg>
</div>
</body></html>
